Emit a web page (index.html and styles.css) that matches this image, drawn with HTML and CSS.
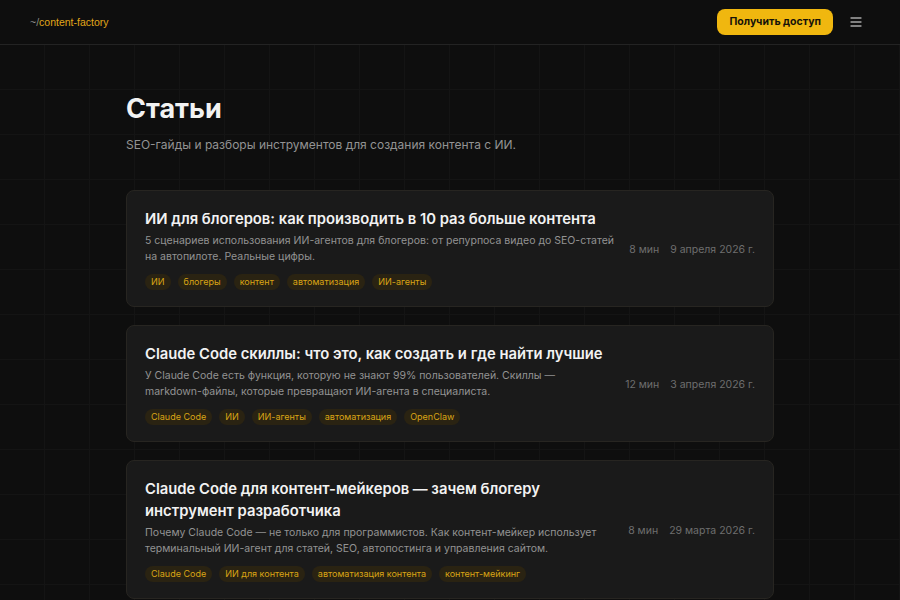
FILE: index.html
```html
<!DOCTYPE html>
<html lang="ru">
<head>
    <meta charset="UTF-8">
    <meta name="viewport" content="width=device-width, initial-scale=1.0">
    <title>Статьи — content-factory</title>
    <link rel="stylesheet" href="styles.css">
</head>
<body>
    <header class="topbar">
        <a href="#" class="logo"><span class="logo-path">~/</span>content-factory</a>
        <div class="topbar-actions">
            <a href="#" class="btn-access">Получить доступ</a>
            <button class="menu-btn" aria-label="Меню">
                <svg width="12" height="12" viewBox="0 0 12 12" fill="none" stroke="currentColor" stroke-width="1.3" stroke-linecap="round">
                    <path d="M1 2h10M1 6h10M1 10h10"/>
                </svg>
            </button>
        </div>
    </header>

    <main class="content">
        <h1>Статьи</h1>
        <p class="lead">SEO-гайды и разборы инструментов для создания контента с ИИ.</p>

        <div class="post-list">
            <a href="#" class="post-card">
                <div class="post-body">
                    <h2>ИИ для блогеров: как производить в 10 раз больше контента</h2>
                    <p>5 сценариев использования ИИ-агентов для блогеров: от репурпоса видео до SEO-статей на автопилоте. Реальные цифры.</p>
                    <div class="tags">
                        <span class="tag">ИИ</span>
                        <span class="tag">блогеры</span>
                        <span class="tag">контент</span>
                        <span class="tag">автоматизация</span>
                        <span class="tag">ИИ-агенты</span>
                    </div>
                </div>
                <div class="post-meta">
                    <span>8 мин</span>
                    <span>9 апреля 2026 г.</span>
                </div>
            </a>

            <a href="#" class="post-card">
                <div class="post-body">
                    <h2>Claude Code скиллы: что это, как создать и где найти лучшие</h2>
                    <p>У Claude Code есть функция, которую не знают 99% пользователей. Скиллы — markdown-файлы, которые превращают ИИ-агента в специалиста.</p>
                    <div class="tags">
                        <span class="tag">Claude Code</span>
                        <span class="tag">ИИ</span>
                        <span class="tag">ИИ-агенты</span>
                        <span class="tag">автоматизация</span>
                        <span class="tag">OpenClaw</span>
                    </div>
                </div>
                <div class="post-meta">
                    <span>12 мин</span>
                    <span>3 апреля 2026 г.</span>
                </div>
            </a>

            <a href="#" class="post-card">
                <div class="post-body">
                    <h2>Claude Code для контент-мейкеров — зачем блогеру инструмент разработчика</h2>
                    <p>Почему Claude Code — не только для программистов. Как контент-мейкер использует терминальный ИИ-агент для статей, SEO, автопостинга и управления сайтом.</p>
                    <div class="tags">
                        <span class="tag">Claude Code</span>
                        <span class="tag">ИИ для контента</span>
                        <span class="tag">автоматизация контента</span>
                        <span class="tag">контент-мейкинг</span>
                    </div>
                </div>
                <div class="post-meta">
                    <span>8 мин</span>
                    <span>29 марта 2026 г.</span>
                </div>
            </a>
        </div>
    </main>
</body>
</html>
```

FILE: styles.css
```css
:root {
    --bg-color: #0e0e0e;
    --grid-color: #141414;
    --card-color: #1a1a1a;
    --border-color: #272521;
    --accent-color: #f0b70f;
    --tag-text: #d9a414;
    --tag-bg: #2a2312;
    --text-color: #f2f2f2;
    --muted-color: #939393;
    --meta-color: #6e6e6e;
}
body, html {
    margin: 0;
    padding: 0;
}
body {
    font-family: Inter, 'Noto Sans', sans-serif;
    color: var(--text-color);
    background-color: var(--bg-color);
    background-image:
        linear-gradient(to right, var(--grid-color) 1px, transparent 1px),
        linear-gradient(to bottom, var(--grid-color) 1px, transparent 1px);
    background-size: 45px 45px;
    background-position: -1px -1px;
    min-height: 100vh;
}
a {
    text-decoration: none;
    color: inherit;
}
.topbar {
    height: 44px;
    display: flex;
    align-items: center;
    justify-content: space-between;
    padding: 0 38px 0 30px;
    background-color: var(--bg-color);
    border-bottom: 1px solid #232323;
}
.logo {
    font-family: 'Liberation Sans', Arial, sans-serif;
    font-size: 10.5px;
    color: #e2a719;
}
.logo-path {
    color: #8a8a8a;
}
.topbar-actions {
    display: flex;
    align-items: center;
    gap: 17px;
}
.btn-access {
    display: block;
    height: 26px;
    line-height: 26px;
    padding: 0 12px;
    border-radius: 8px;
    background-color: var(--accent-color);
    color: #15120a;
    font-size: 10.5px;
    font-weight: 700;
}
.menu-btn {
    display: flex;
    padding: 0;
    border: none;
    background: none;
    color: #a8a8a8;
    cursor: pointer;
}
.content {
    max-width: 648px;
    margin: 0 auto;
    padding-top: 47px;
}
.content h1 {
    margin: 0;
    font-size: 27px;
    line-height: 34px;
    font-weight: 700;
}
.lead {
    margin: 9px 0 0;
    font-size: 12px;
    line-height: 20px;
    color: var(--muted-color);
}
.post-list {
    display: flex;
    flex-direction: column;
    gap: 18px;
    margin-top: 35px;
}
.post-card {
    display: flex;
    align-items: center;
    gap: 12px;
    padding: 17px 18px 16px;
    background-color: var(--card-color);
    border: 1px solid var(--border-color);
    border-radius: 8px;
}
.post-body {
    flex: 1;
    min-width: 0;
}
.post-body h2 {
    margin: 0;
    font-size: 14.8px;
    line-height: 22px;
    font-weight: 600;
}
.post-body p {
    margin: 3px 0 0;
    font-size: 10.5px;
    line-height: 16px;
    color: var(--muted-color);
}
.tags {
    display: flex;
    flex-wrap: wrap;
    gap: 7px;
    margin-top: 9px;
}
.tag {
    padding: 0 6px;
    height: 16px;
    line-height: 16px;
    border-radius: 8px;
    background-color: var(--tag-bg);
    color: var(--tag-text);
    font-size: 9px;
}
.post-meta {
    display: flex;
    gap: 11px;
    font-size: 10.5px;
    color: var(--meta-color);
    white-space: nowrap;
}
```
